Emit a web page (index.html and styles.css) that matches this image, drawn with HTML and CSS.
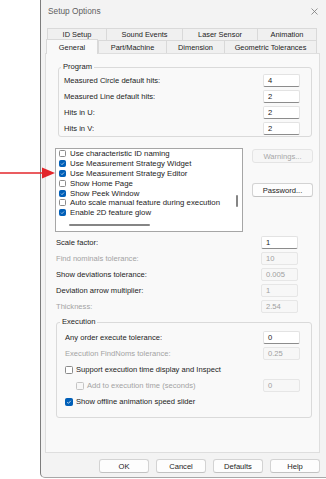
FILE: index.html
```html
<!DOCTYPE html>
<html lang="en">
<head>
  <meta charset="UTF-8" />
  <title>Setup Options</title>
  <link rel="stylesheet" href="styles.css">
</head>
<body>
  <div class="screen">
    <!-- red pointer drawn over the screenshot -->
    <svg class="arrow" width="58" height="14" viewBox="0 0 58 14">
      <line x1="0" y1="7" x2="46" y2="7" stroke="#e3262b" stroke-width="1.6" />
      <polygon points="42,1.5 55,7 42,12.5" fill="#e3262b" />
    </svg>

    <div class="dialog">
      <div class="titlebar">
        <span class="title">Setup Options</span>
        <svg class="close" width="7" height="7" viewBox="0 0 7 7">
          <path d="M0.5 0.5 L6.5 6.5 M6.5 0.5 L0.5 6.5" stroke="#7a7a7a" stroke-width="0.8" />
        </svg>
      </div>

      <div class="tabs">
        <div class="tab-row row-back">
          <div class="tab">ID Setup</div>
          <div class="tab">Sound Events</div>
          <div class="tab">Laser Sensor</div>
          <div class="tab">Animation</div>
        </div>
        <div class="tab-row row-front">
          <div class="tab active">General</div>
          <div class="tab">Part/Machine</div>
          <div class="tab">Dimension</div>
          <div class="tab">Geometric Tolerances</div>
        </div>
      </div>

      <div class="panel">
        <fieldset class="group program">
          <legend>Program</legend>
          <div class="field"><span class="label">Measured Circle default hits:</span><span class="box">4</span></div>
          <div class="field"><span class="label">Measured Line default hits:</span><span class="box">2</span></div>
          <div class="field"><span class="label">Hits in U:</span><span class="box">2</span></div>
          <div class="field"><span class="label">Hits in V:</span><span class="box">2</span></div>
        </fieldset>

        <div class="list-area">
          <div class="listbox">
            <div class="list-items">
              <div class="item"><span class="cb"></span>Use characteristic ID naming</div>
              <div class="item"><span class="cb on"></span>Use Measurement Strategy Widget</div>
              <div class="item"><span class="cb on"></span>Use Measurement Strategy Editor</div>
              <div class="item"><span class="cb"></span>Show Home Page</div>
              <div class="item"><span class="cb on"></span>Show Peek Window</div>
              <div class="item"><span class="cb"></span>Auto scale manual feature during execution</div>
              <div class="item"><span class="cb on"></span>Enable 2D feature glow</div>
            </div>
            <div class="vscroll"><span class="thumb"></span></div>
            <div class="hscroll"><span class="thumb"></span></div>
            <div class="corner"></div>
          </div>
          <div class="side-buttons">
            <button class="btn disabled">Warnings...</button>
            <button class="btn">Password...</button>
          </div>
        </div>

        <div class="fields">
          <div class="field"><span class="label">Scale factor:</span><span class="box">1</span></div>
          <div class="field"><span class="label off">Find nominals tolerance:</span><span class="box off">10</span></div>
          <div class="field"><span class="label">Show deviations tolerance:</span><span class="box off">0.005</span></div>
          <div class="field"><span class="label">Deviation arrow multiplier:</span><span class="box off">1</span></div>
          <div class="field"><span class="label off">Thickness:</span><span class="box off">2.54</span></div>
        </div>

        <fieldset class="group execution">
          <legend>Execution</legend>
          <div class="field"><span class="label">Any order execute tolerance:</span><span class="box">0</span></div>
          <div class="field"><span class="label off">Execution FindNoms tolerance:</span><span class="box off">0.25</span></div>
          <div class="check-row"><span class="cb big"></span>Support execution time display and Inspect</div>
          <div class="field indent">
            <span class="check-row off"><span class="cb big off"></span>Add to execution time (seconds)</span>
            <span class="box off">0</span>
          </div>
          <div class="check-row"><span class="cb big on"></span>Show offline animation speed slider</div>
        </fieldset>
      </div>

      <div class="footer">
        <button class="btn">OK</button>
        <button class="btn">Cancel</button>
        <button class="btn">Defaults</button>
        <button class="btn">Help</button>
      </div>
    </div>
  </div>
</body>
</html>
```

FILE: styles.css
```css
* {
  margin: 0;
  padding: 0;
  box-sizing: border-box;
}

body {
  background: #fff;
  font-family: "Liberation Sans", Arial, sans-serif;
  font-size: 7.6px;
  color: #1c1c1c;
}

.screen {
  position: relative;
  width: 326px;
  height: 479px;
  overflow: hidden;
}

.arrow {
  position: absolute;
  left: 0;
  top: 166px;
}

.dialog {
  margin-left: 40px;
  width: 286px;
  height: 478px;
  background: #f3f3f3;
  border-left: 1px solid #7d7d7d;
  border-bottom: 1px solid #a8a8a8;
  border-bottom-left-radius: 5px;
  display: flex;
  flex-direction: column;
}

.titlebar {
  height: 22px;
  display: flex;
  align-items: center;
  justify-content: space-between;
  padding: 0 8px 0 7px;
}
.title {
  font-size: 8.3px;
  color: #5f5f5f;
}

/* tabs */
.tabs {
  margin-top: 6px;
}
.tab-row {
  display: grid;
  height: 12px;
}
.row-back {
  grid-template-columns: 59px 76px 75px 60px;
  margin-left: 6px;
}
.row-front {
  grid-template-columns: 52px 68px 58px 93px;
  margin-left: 5px;
  height: 13px;
}
.tab {
  display: flex;
  align-items: center;
  justify-content: center;
  font-size: 7.4px;
  background: #f0f0f0;
  border: 1px solid #d9d9d9;
  border-right: none;
  border-bottom: none;
}
.tab:last-child {
  border-right: 1px solid #d9d9d9;
}
.tab.active {
  position: relative;
  z-index: 1;
  margin-top: -1px;
  height: 15px;
  background: #f9f9f9;
  border-right: 1px solid #d9d9d9;
}

.panel {
  margin-left: 4px;
  width: 275px;
  height: 400px;
  background: #f9f9f9;
  border: 1px solid #dedede;
}

/* group boxes */
.group {
  border: 1px solid #dadada;
  border-radius: 3px;
  display: flex;
  flex-direction: column;
  gap: 3px;
}
.group legend {
  line-height: 10px;
  padding: 0 2px;
}
.program {
  margin: 8px 7px 0 12px;
  padding: 2px 11px 1px 5px;
}
.program legend {
  margin-left: -3px;
}
.execution {
  margin: 4px 7px 0 10px;
  padding: 4px 11px 9px 8px;
}
.execution legend {
  margin-left: -5px;
}

.field {
  display: flex;
  align-items: center;
  justify-content: space-between;
  height: 13px;
}
.label.off,
.check-row.off {
  color: #a3a3a3;
}
.box {
  width: 37px;
  height: 13px;
  line-height: 11px;
  padding-left: 4px;
  background: #fff;
  border: 1px solid #e3e3e3;
  border-bottom-color: #8c8c8c;
  border-radius: 2px;
}
.box.off {
  background: #f7f7f7;
  border-color: #e6e6e6;
  color: #a0a0a0;
}

/* checkbox list */
.list-area {
  display: flex;
  gap: 9px;
  margin: 11px 0 0 9px;
}
.listbox {
  width: 188px;
  height: 84px;
  background: #fff;
  border: 1px solid #a6a6a6;
  display: grid;
  grid-template-columns: 1fr 11px;
  grid-template-rows: 1fr 12px;
}
.list-items {
  overflow: hidden;
}
.item {
  height: 9.8px;
  display: flex;
  align-items: center;
  gap: 4px;
  padding-left: 3px;
  font-size: 7.8px;
  white-space: nowrap;
}
.cb {
  width: 7px;
  height: 7px;
  flex: none;
  background: #fff;
  border: 1px solid #8b8b8b;
  border-radius: 1.5px;
}
.cb.on {
  border-color: #005fb8;
  background: #005fb8 url("data:image/svg+xml,%3Csvg xmlns='http://www.w3.org/2000/svg' viewBox='0 0 8 8'%3E%3Cpath d='M1.6 4.2 L3.2 5.8 L6.4 2.4' fill='none' stroke='white' stroke-width='1'/%3E%3C/svg%3E") center / 100% no-repeat;
}
.cb.big {
  width: 8px;
  height: 8px;
}
.cb.big.off {
  border-color: #c4c4c4;
  background-color: #f7f7f7;
}
.vscroll {
  position: relative;
}
.vscroll .thumb {
  position: absolute;
  left: 5px;
  top: 46px;
  width: 2px;
  height: 12px;
  background: #858585;
  border-radius: 1px;
}
.hscroll {
  position: relative;
}
.hscroll .thumb {
  position: absolute;
  left: 13px;
  top: 5px;
  width: 81px;
  height: 2px;
  background: #858585;
  border-radius: 1px;
}

.side-buttons {
  display: flex;
  flex-direction: column;
  gap: 20px;
  padding-top: 1px;
}
.side-buttons .btn {
  width: 61px;
}

.btn {
  font: inherit;
  color: #1c1c1c;
  height: 14px;
  background: #fdfdfd;
  border: 1px solid #d3d3d3;
  border-bottom-color: #c2c2c2;
  border-radius: 3px;
}
.btn.disabled {
  color: #a6a6a6;
  background: #f6f6f6;
  border-color: #e4e4e4;
}

.fields {
  display: flex;
  flex-direction: column;
  gap: 3px;
  margin: 4px 0 0 10px;
  width: 242px;
}

.check-row {
  display: flex;
  align-items: center;
  gap: 3px;
  height: 13px;
}
.indent {
  padding-left: 11px;
}

.footer {
  display: flex;
  justify-content: flex-end;
  gap: 7px;
  padding-right: 6px;
  margin-top: 6px;
}
.footer .btn {
  width: 50px;
}
```
